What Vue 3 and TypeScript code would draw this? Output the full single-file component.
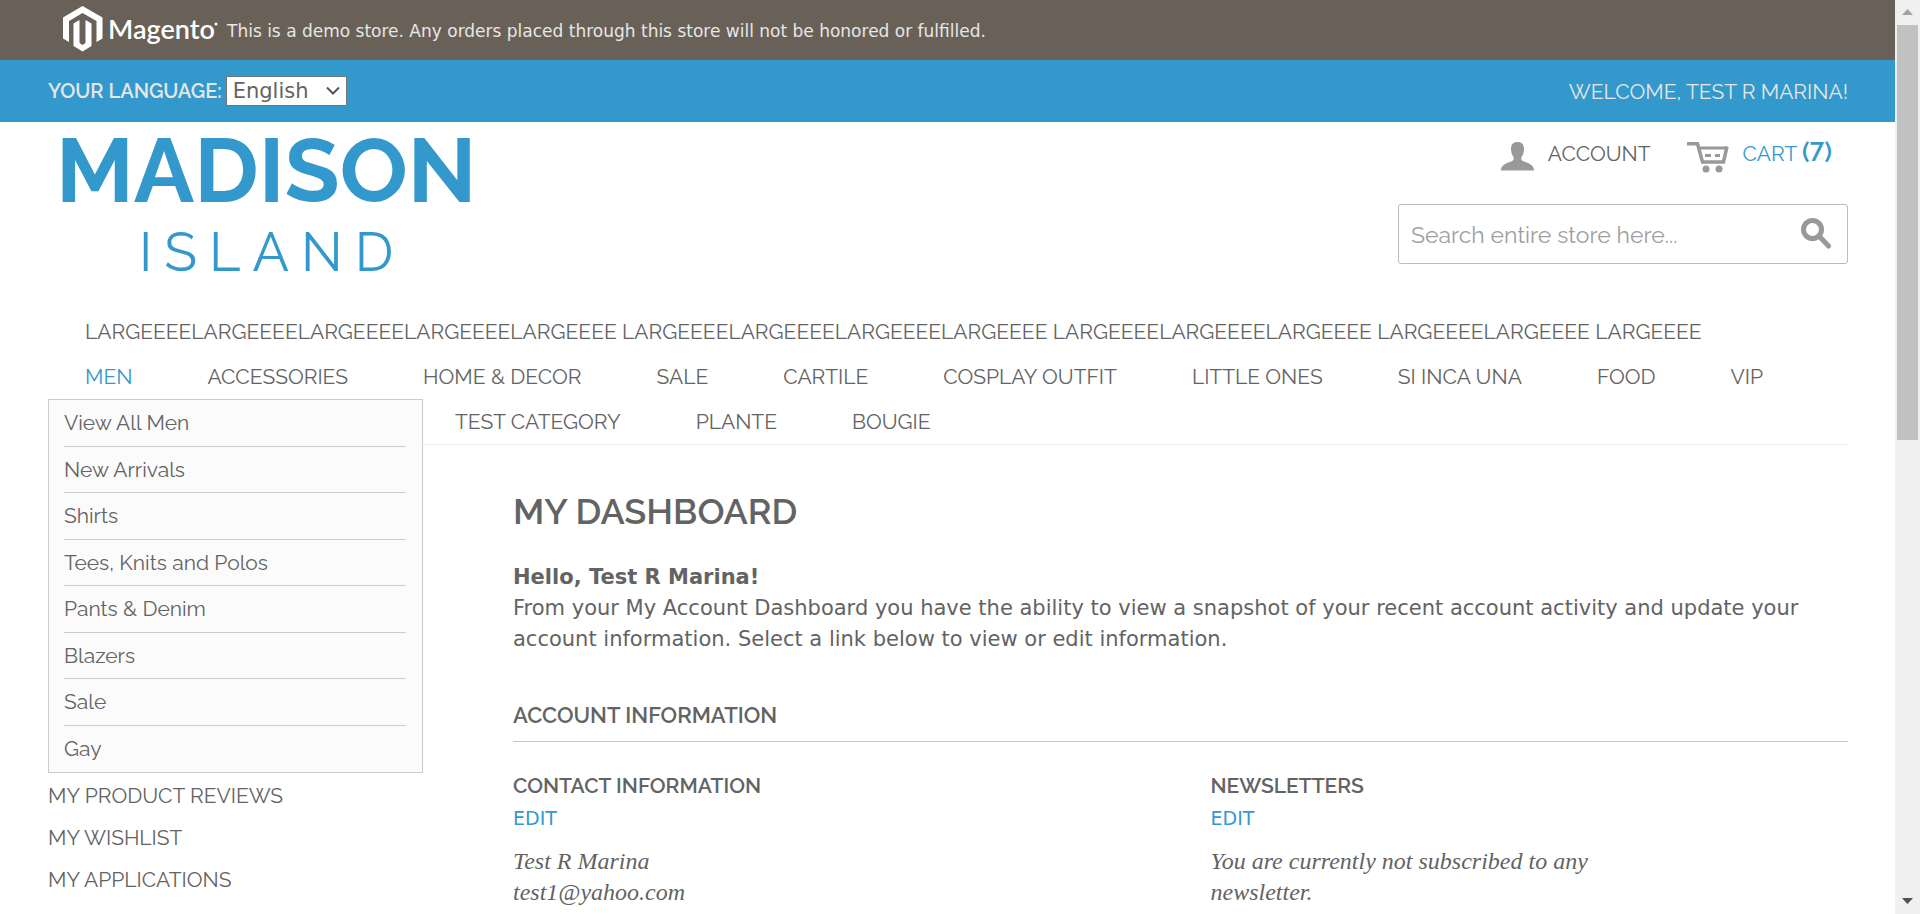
<script setup lang="ts">
import { ref } from 'vue'

interface NavItem {
  label: string
  active?: boolean
}

const language = ref('English')
const query = ref('')

const navRows: NavItem[][] = [
  [
    {
      label:
        'LARGEEEELARGEEEELARGEEEELARGEEEELARGEEEE LARGEEEELARGEEEELARGEEEELARGEEEE LARGEEEELARGEEEELARGEEEE LARGEEEELARGEEEE LARGEEEE',
    },
  ],
  [
    { label: 'MEN', active: true },
    { label: 'ACCESSORIES' },
    { label: 'HOME & DECOR' },
    { label: 'SALE' },
    { label: 'CARTILE' },
    { label: 'COSPLAY OUTFIT' },
    { label: 'LITTLE ONES' },
    { label: 'SI INCA UNA' },
    { label: 'FOOD' },
    { label: 'VIP' },
  ],
  [{ label: 'TEST CATEGORY' }, { label: 'PLANTE' }, { label: 'BOUGIE' }],
]

const menItems = [
  'View All Men',
  'New Arrivals',
  'Shirts',
  'Tees, Knits and Polos',
  'Pants & Denim',
  'Blazers',
  'Sale',
  'Gay',
]

const accountLinks = ['MY PRODUCT REVIEWS', 'MY WISHLIST', 'MY APPLICATIONS']
</script>

<template>
  <div class="window">
    <div class="page">
      <div class="demo-bar">
        <svg class="magento" viewBox="0 0 156 60" role="img" aria-label="Magento">
          <path d="M19.500 6 L39.500 17.500 V38.500 L33.500 42 V21 L19.500 13 L6 21 V42 L0 38.500 V17.500 Z" />
          <path d="M10.500 23.500 L16.500 20 V43 L19.500 45 L22.500 43 V20 L28.500 23.500 V46 L19.500 51.500 L10.500 46 Z" />
          <text x="45" y="39">Magento</text>
          <circle cx="153" cy="24" r="1.500" />
        </svg>
        <p class="demo-text">This is a demo store. Any orders placed through this store will not be honored or fulfilled.</p>
      </div>

      <div class="top-bar">
        <div class="language">
          <label for="language">YOUR LANGUAGE:</label>
          <span class="select-wrap">
            <select id="language" v-model="language">
              <option>English</option>
            </select>
            <svg class="chevron" viewBox="0 0 14 10" aria-hidden="true"><path d="M1 1.500 L7 7.500 L13 1.500" /></svg>
          </span>
        </div>
        <p class="welcome">WELCOME, TEST R MARINA!</p>
      </div>

      <header class="header">
        <a class="logo" href="#" aria-label="Madison Island">
          <span class="logo-main">MADISON</span>
          <span class="logo-sub">ISLAND</span>
        </a>
        <div class="tools">
          <div class="tool-links">
            <a class="account" href="#">
              <svg class="person" viewBox="0 0 33 29" aria-hidden="true">
                <path d="M16.500 0 C21 0 23 2.500 23 7 C23 11 21.500 13.500 20.500 15 C20 17.500 20.500 18.500 23 19.500 C29 21.500 33 23.500 33 28.500 H0 C0 23.500 4 21.500 10 19.500 C12.500 18.500 13 17.500 12.500 15 C11.500 13.500 10 11 10 7 C10 2.500 12 0 16.500 0 Z" />
              </svg>
              <span>ACCOUNT</span>
            </a>
            <a class="cart" href="#">
              <svg class="trolley" viewBox="0 0 42 31" aria-hidden="true">
                <path class="line" d="M0 1.800 H10.500 L15.500 20 H36.500 L40 4.500" />
                <path class="line thin" d="M11.500 6 H40" />
                <path class="line thin" d="M18 13.500 H24 M28 13.500 H33" />
                <circle cx="19" cy="27" r="3.500" />
                <circle cx="32" cy="27" r="3.500" />
              </svg>
              <span>CART <b>(7)</b></span>
            </a>
          </div>
          <form class="search" role="search" @submit.prevent>
            <input v-model="query" type="search" aria-label="Search" placeholder="Search entire store here..." />
            <button type="submit" aria-label="Search">
              <svg viewBox="0 0 31 31" aria-hidden="true">
                <circle cx="11.500" cy="11.500" r="9" />
                <path d="M18.500 18.500 L27.500 28" />
              </svg>
            </button>
          </form>
        </div>
      </header>

      <nav class="nav">
        <ul v-for="(row, i) in navRows" :key="i" class="nav-row" :class="{ 'after-menu': i === 2 }">
          <li v-for="item in row" :key="item.label">
            <a href="#" :class="{ active: item.active }">{{ item.label }}</a>
          </li>
        </ul>
        <ul class="dropdown">
          <li v-for="item in menItems" :key="item">
            <a href="#">{{ item }}</a>
          </li>
        </ul>
      </nav>

      <div class="columns">
        <aside class="sidebar">
          <ul>
            <li v-for="link in accountLinks" :key="link">
              <a href="#">{{ link }}</a>
            </li>
          </ul>
        </aside>
        <main class="main">
          <h1>MY DASHBOARD</h1>
          <p class="intro">
            <strong>Hello, Test R Marina!</strong><br />
            From your My Account Dashboard you have the ability to view a snapshot of your recent account activity and
            update your account information. Select a link below to view or edit information.
          </p>
          <h2>ACCOUNT INFORMATION</h2>
          <div class="boxes">
            <section>
              <h3>CONTACT INFORMATION</h3>
              <a class="edit" href="#">EDIT</a>
              <p>Test R Marina<br />test1@yahoo.com</p>
            </section>
            <section>
              <h3>NEWSLETTERS</h3>
              <a class="edit" href="#">EDIT</a>
              <p>You are currently not subscribed to any newsletter.</p>
            </section>
          </div>
        </main>
      </div>
    </div>

    <div class="scrollbar" aria-hidden="true">
      <svg viewBox="0 0 11 7"><path class="dim" d="M5.500 0 L11 6 H0 Z" /></svg>
      <div class="track"><div class="thumb"></div></div>
      <svg viewBox="0 0 11 7"><path d="M0 0 H11 L5.500 6 Z" /></svg>
    </div>
  </div>
</template>

<style>
body {
  margin: 0;
  background: #fff;
}
</style>

<style scoped>
.window {
  display: grid;
  grid-template-columns: minmax(0, 1fr) 25px;
  height: 100vh;
  overflow: hidden;
  color: #636363;
  font-family: Raleway, Lato, sans-serif;
  font-size: 21px;
}
.page {
  min-width: 0;
  overflow: hidden;
}
a {
  color: inherit;
  text-decoration: none;
}
ul,
p,
h1,
h2,
h3 {
  margin: 0;
  padding: 0;
  list-style: none;
}

.demo-bar {
  display: flex;
  align-items: center;
  gap: 8px;
  height: 60px;
  padding: 0 63px;
  background: #696158;
}
.magento {
  width: 156px;
  height: 60px;
  fill: #fff;
}
.magento text {
  font-family: Lato, sans-serif;
  font-size: 27px;
  font-weight: 600;
}
.demo-text {
  padding-top: 2px;
  color: #e6e6e6;
  font-family: Verdana, "DejaVu Sans", sans-serif;
  font-size: 17px;
}

.top-bar {
  display: flex;
  align-items: center;
  justify-content: space-between;
  height: 62px;
  padding: 0 47px 0 48px;
  background: #3399cc;
  color: #e6e6e6;
}
.language {
  display: flex;
  align-items: center;
  gap: 4px;
}
.language label {
  font-size: 20px;
  font-weight: 600;
}
.select-wrap {
  position: relative;
  display: flex;
}
.select-wrap select {
  appearance: none;
  width: 121px;
  height: 30px;
  padding: 0 24px 0 6px;
  border: 1px solid #767676;
  border-radius: 0;
  background: #fff;
  color: #636363;
  font-family: Verdana, "DejaVu Sans", sans-serif;
  font-size: 21px;
}
.chevron {
  position: absolute;
  top: 10px;
  right: 7px;
  width: 14px;
  height: 10px;
  fill: none;
  stroke: #555;
  stroke-width: 2;
  pointer-events: none;
}

.header {
  display: flex;
  justify-content: space-between;
  height: 187px;
  padding: 0 47px 0 56px;
}
.logo {
  display: flex;
  flex-direction: column;
  align-items: center;
  color: #3399cc;
}
.logo-main {
  font-size: 90px;
  font-weight: 700;
  line-height: 96px;
}
.logo-sub {
  padding-left: 12px;
  font-size: 54px;
  font-weight: 400;
  line-height: 68px;
  letter-spacing: 12px;
}
.tools {
  display: flex;
  flex-direction: column;
  width: 450px;
  padding-top: 20px;
}
.tool-links {
  display: flex;
  justify-content: flex-end;
  gap: 36px;
  height: 34px;
  padding-right: 16px;
  margin-bottom: 28px;
}
.account,
.cart {
  display: flex;
  align-items: flex-start;
  gap: 14px;
  line-height: 24px;
}
.cart {
  color: #3399cc;
}
.cart b {
  font-size: 26px;
  font-weight: 600;
  line-height: 20px;
  font-variant-numeric: lining-nums;
}
.person {
  width: 33px;
  height: 29px;
  fill: #999;
}
.trolley {
  width: 42px;
  height: 31px;
  fill: #999;
}
.line {
  fill: none;
  stroke: #999;
  stroke-width: 3.5;
}
.thin {
  stroke-width: 3;
}
.search {
  display: flex;
  height: 60px;
  box-sizing: border-box;
  border: 1px solid #bbb;
  border-radius: 3px;
}
.search input {
  flex: 1;
  min-width: 0;
  padding: 0 12px;
  border: 0;
  outline: 0;
  background: none;
  color: #636363;
  font-family: inherit;
  font-size: 23px;
}
.search input::placeholder {
  color: #a0a0a0;
}
.search button {
  display: flex;
  align-items: flex-start;
  width: 46px;
  padding: 13px 0 0;
  border: 0;
  background: none;
}
.search svg {
  width: 31px;
  height: 31px;
  fill: none;
  stroke: #999;
  stroke-width: 5;
  stroke-linecap: round;
}

.nav {
  position: relative;
  margin: 0 47px 0 48px;
  padding: 0 37px 0;
  border-bottom: 1px solid #ededed;
}
.nav-row {
  display: flex;
  gap: 75px;
  height: 45px;
  line-height: 45px;
  white-space: nowrap;
}
.nav-row.after-menu {
  padding-left: 370px;
}
.active {
  color: #3399cc;
}
.dropdown {
  position: absolute;
  top: 90px;
  left: 0;
  display: grid;
  grid-auto-rows: 1fr;
  box-sizing: border-box;
  width: 375px;
  height: 374px;
  padding: 0 16px 0 15px;
  border: 1px solid #ccc;
  background: #fbfbfb;
}
.dropdown li {
  display: flex;
  align-items: center;
  border-bottom: 1px solid #ccc;
}
.dropdown li:last-child {
  border-bottom: 0;
}

.columns {
  display: grid;
  grid-template-columns: 465px minmax(0, 1fr);
  padding: 0 47px 0 48px;
}
.sidebar {
  padding-top: 330px;
}
.sidebar li {
  line-height: 42px;
}
.main {
  padding-top: 43px;
}
h1 {
  margin-bottom: 28px;
  font-size: 36px;
  font-weight: 600;
  line-height: 46px;
}
.intro {
  margin-bottom: 45px;
  font-family: Verdana, "DejaVu Sans", sans-serif;
  font-size: 21px;
  line-height: 31px;
}
h2 {
  padding-bottom: 11px;
  margin-bottom: 28px;
  border-bottom: 1px solid #c7c7c7;
  font-size: 22px;
  font-weight: 600;
  line-height: 30px;
}
.boxes {
  display: grid;
  grid-template-columns: 1fr 1fr;
  gap: 60px;
}
h3 {
  font-size: 21px;
  font-weight: 600;
  line-height: 32px;
}
.edit {
  display: block;
  color: #3399cc;
  font-family: Verdana, "DejaVu Sans", sans-serif;
  font-size: 19px;
  line-height: 32px;
}
.boxes p {
  max-width: 420px;
  margin-top: 12px;
  font-family: Georgia, "Liberation Serif", serif;
  font-size: 24px;
  font-style: italic;
  line-height: 31px;
}

.scrollbar {
  display: flex;
  flex-direction: column;
  align-items: center;
  padding: 9px 0;
  background: #f0f0f0;
}
.scrollbar svg {
  width: 11px;
  height: 7px;
  fill: #505050;
}
.scrollbar .dim {
  fill: #a3a3a3;
}
.track {
  flex: 1;
  width: 21px;
  padding: 9px 0;
}
.thumb {
  height: 48%;
  background: #c1c1c1;
}
</style>
